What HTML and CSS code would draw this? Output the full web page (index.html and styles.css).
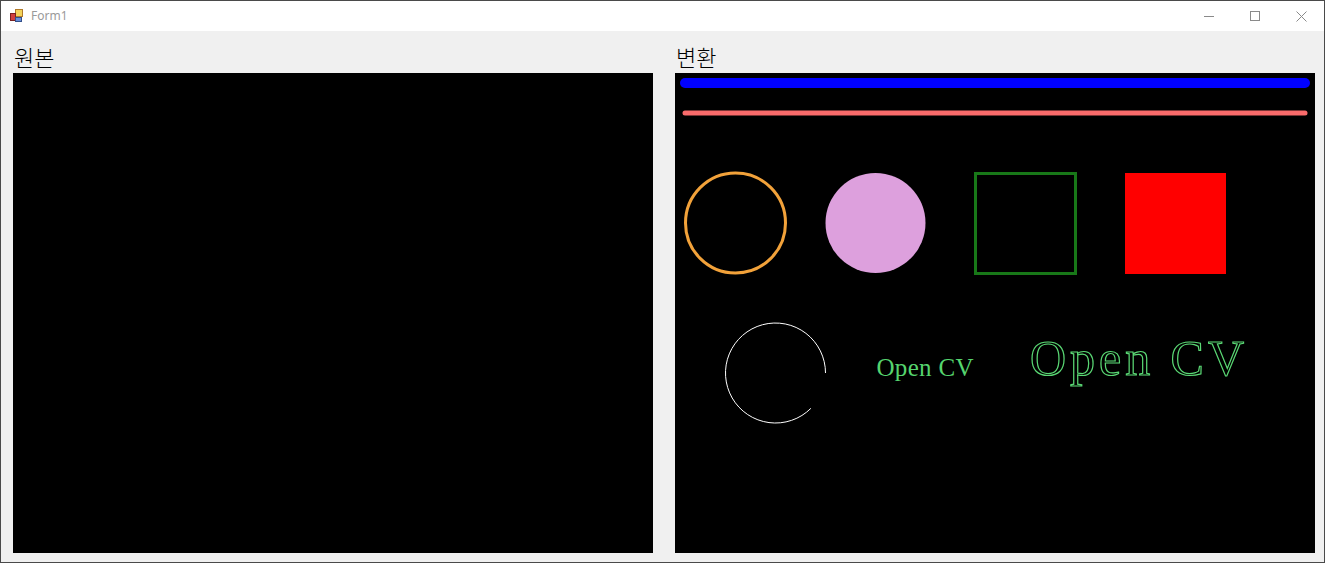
FILE: index.html
```html
<!DOCTYPE html>
<html lang="ko">
<head>
<meta charset="utf-8">
<title>Form1</title>
<link rel="stylesheet" href="styles.css">
</head>
<body>
<div class="window">
  <div class="titlebar">
    <svg class="app-icon" width="13" height="13" viewBox="0 0 13 13">
      <rect x="5.5" y="0.5" width="7" height="7" fill="#f3d35a" stroke="#b07a2a" stroke-width="1"/>
      <rect x="0.5" y="4.5" width="5" height="7" fill="#d04040" stroke="#7a2020" stroke-width="1"/>
      <rect x="5.5" y="8.5" width="6" height="4" fill="#6a8fd8" stroke="#33508a" stroke-width="1"/>
    </svg>
    <span class="title">Form1</span>
    <div class="controls">
      <div class="ctl"><svg width="10" height="10" viewBox="0 0 10 10"><path d="M0 5.5H10" stroke="#8a8a8a" stroke-width="1"/></svg></div>
      <div class="ctl"><svg width="10" height="10" viewBox="0 0 10 10"><rect x="0.5" y="0.5" width="9" height="9" fill="none" stroke="#8a8a8a" stroke-width="1"/></svg></div>
      <div class="ctl"><svg width="11" height="11" viewBox="0 0 11 11"><path d="M0.5 0.5L10.5 10.5M10.5 0.5L0.5 10.5" stroke="#8a8a8a" stroke-width="1"/></svg></div>
    </div>
  </div>
  <div class="client">
    <div class="pane">
      <div class="label">원본</div>
      <div class="view"></div>
    </div>
    <div class="pane">
      <div class="label">변환</div>
      <svg class="view" width="640" height="480" viewBox="0 0 640 480">
        <line x1="10" y1="10" x2="630" y2="10" stroke="#0000ff" stroke-width="10" stroke-linecap="round"/>
        <line x1="10" y1="40" x2="630" y2="40" stroke="#f96b6b" stroke-width="5" stroke-linecap="round"/>
        <circle cx="60.5" cy="150" r="50" fill="none" stroke="#f2a23a" stroke-width="3"/>
        <circle cx="200.5" cy="150" r="50" fill="#dda0dd"/>
        <rect x="300.5" y="100.5" width="100" height="100" fill="none" stroke="#187818" stroke-width="3"/>
        <rect x="450" y="100" width="101" height="101" fill="#ff0000"/>
        <path d="M135.86 335.36 A50 50 0 1 1 150.5 300" fill="none" stroke="#ffffff" stroke-width="1"/>
        <text class="cvtext" x="201.5" y="302.5" font-size="25" textLength="97" lengthAdjust="spacing">Open CV</text>
        <text class="cvtext big" x="355" y="301.5" font-size="50" textLength="214" lengthAdjust="spacing">Open CV</text>
      </svg>
    </div>
  </div>
</div>
</body>
</html>
```
FILE: styles.css
```css
html, body {
  margin: 0;
  padding: 0;
  background: #f0f0f0;
}

.window {
  width: 1325px;
  height: 563px;
  box-sizing: border-box;
  border: 1px solid #4a4a4a;
  background: #f0f0f0;
  display: flex;
  flex-direction: column;
  overflow: hidden;
}

.titlebar {
  height: 30px;
  background: #ffffff;
  display: flex;
  align-items: center;
  flex: none;
}

.app-icon {
  margin-left: 9px;
  margin-top: -2px;
  flex: none;
}

.title {
  margin-left: 8px;
  font-family: "Noto Sans", "Liberation Sans", sans-serif;
  font-size: 12px;
  color: #9a9a9a;
  margin-top: -1px;
}

.controls {
  margin-left: auto;
  display: flex;
  height: 100%;
}

.ctl {
  width: 46px;
  height: 30px;
  display: flex;
  align-items: center;
  justify-content: center;
}

.client {
  display: flex;
  gap: 22px;
  padding-left: 12px;
}

.pane {
  display: flex;
  flex-direction: column;
}

.label {
  height: 42px;
  box-sizing: border-box;
  padding-top: 12px;
  padding-left: 1px;
  font-family: "Noto Sans CJK KR", "Noto Sans", sans-serif;
  font-size: 22px;
  font-weight: 300;
  line-height: 26px;
  color: #000000;
}

.view {
  display: block;
  width: 640px;
  height: 480px;
  background: #000000;
}

.cvtext {
  font-family: "Liberation Serif", "DejaVu Serif", serif;
  fill: #55d46e;
}

.cvtext.big {
  fill: none;
  stroke: #5ad874;
  stroke-width: 1.2;
}
```
